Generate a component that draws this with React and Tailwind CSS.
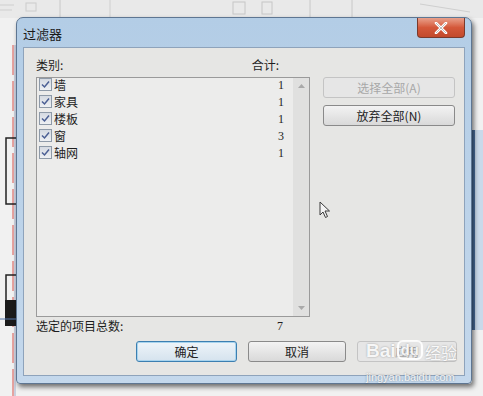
import React from "react";

const rows = [
  ["墙", "1"],
  ["家具", "1"],
  ["楼板", "1"],
  ["窗", "3"],
  ["轴网", "1"],
];

function Check() {
  return (
    <div className="w-[13px] h-[13px] border border-[#8e9aa8] bg-gradient-to-b from-[#d5dae2] to-[#eef0f3] flex items-center justify-center shrink-0">
      <svg width="9" height="9" viewBox="0 0 9 9">
        <path d="M1 4.5 L3.5 7 L8 1.5" fill="none" stroke="#4b5f94" strokeWidth="1.5" />
      </svg>
    </div>
  );
}

function Btn({ children, className = "", disabled = false, focus = false }) {
  return (
    <div
      className={
        "h-[21px] flex items-center justify-center rounded-[3px] text-[12px] " +
        (disabled
          ? "border border-[#c4c4c4] bg-[#e6e6e6] text-[#a8a8a8] "
          : focus
          ? "border border-[#3c7fb1] bg-gradient-to-b from-[#eef4f9] to-[#d5e3ee] text-[#222] shadow-[inset_0_0_0_1px_#a8d4ee] "
          : "border border-[#8a8a8a] bg-gradient-to-b from-[#f3f3f3] to-[#d9d9d9] text-[#222] ") +
        className
      }
    >
      {children}
    </div>
  );
}

export default function App() {
  return (
    <div
      className="relative w-[483px] h-[396px] overflow-hidden bg-[#f1f1f1]"
      style={{ fontFamily: '"Noto Sans CJK SC", "Liberation Sans", sans-serif' }}
    >
      {/* background CAD drawing */}
      <svg className="absolute inset-0" width="483" height="396">
        <rect x="0" y="0" width="483" height="18" fill="#e9e9e9" />
        <line x1="60" y1="0" x2="60" y2="17" stroke="#c8c8c8" />
        <line x1="110" y1="0" x2="110" y2="17" stroke="#cfcfcf" />
        <line x1="310" y1="0" x2="310" y2="17" stroke="#c8c8c8" />
        <line x1="352" y1="0" x2="352" y2="17" stroke="#c8c8c8" />
        <rect x="233" y="2" width="12" height="12" fill="none" stroke="#c6c6c6" />
        <rect x="262" y="2" width="10" height="12" fill="none" stroke="#c6c6c6" />
        <rect x="26" y="3" width="10" height="8" fill="none" stroke="#cccccc" />
        <path d="M0 5 H14 M0 10 H12" stroke="#cfcfcf" />
        <path d="M420 4 L470 12" stroke="#cfcfcf" />
        <line x1="13" y1="45" x2="13" y2="396" stroke="#d9544f" strokeDasharray="30 6" />
        <line x1="15" y1="45" x2="15" y2="396" stroke="#7080b0" strokeWidth="0.6" />
        <rect x="6" y="138" width="12" height="66" fill="none" stroke="#222" strokeWidth="1.5" />
        <rect x="6" y="275" width="12" height="26" fill="none" stroke="#222" strokeWidth="1.5" />
        <rect x="5" y="300" width="12" height="26" fill="#1b1b1b" />
        <line x1="0" y1="319" x2="16" y2="319" stroke="#5577aa" />
        <rect x="472" y="130" width="11" height="200" fill="#c9d9ea" />
        <rect x="472" y="130" width="3" height="200" fill="#4a6f9e" />
      </svg>

      {/* dialog window */}
      <div className="absolute left-[16px] top-[17px] w-[456px] h-[367px] rounded-t-[7px] rounded-b-[4px] bg-gradient-to-b from-[#b3cde6] to-[#c4d8ec] border border-[#5e7692] shadow-[2px_3px_5px_rgba(0,0,0,0.55)] flex flex-col">
        {/* title bar */}
        <div className="relative h-[29px] flex items-center pl-[6px] shrink-0">
          <span className="text-[13px] text-[#1a1a1a] leading-none mt-[2px]">过滤器</span>
          <div className="absolute right-[6px] top-0 w-[48px] h-[20px] rounded-b-[4px] border border-[#7a3a2c] border-t-0 bg-gradient-to-b from-[#e8a08b] via-[#d4583a] to-[#c24a2c] flex items-center justify-center">
            <svg width="14" height="12" viewBox="0 0 14 12">
              <path d="M2 1 L12 11 M12 1 L2 11" stroke="#fff" strokeWidth="2.6" strokeLinecap="round" />
              <path d="M2 1 L12 11 M12 1 L2 11" stroke="#5a5a5a" strokeWidth="0.4" fill="none" />
            </svg>
          </div>
        </div>

        {/* client area */}
        <div className="mx-[6px] mb-[7px] flex-1 bg-[#e6e6e4] border border-[#8ea3bb] pl-[12px] pt-[7px] text-[12px] text-[#1e1e1e]">
          <div className="flex gap-[13px]">
            <div className="w-[274px] flex flex-col">
              <div className="flex justify-between pr-[31px] h-[20px] items-center">
                <span>类别:</span>
                <span>合计:</span>
              </div>
              <div className="mt-[2px] h-[240px] border border-[#9a9a9a] bg-[#ececeb] flex">
                <div className="flex-1 -mt-[2px] flex flex-col">
                  {rows.map(([name, n]) => (
                    <div key={name} className="h-[17px] flex items-center pl-[2px] pr-[9px]">
                      <Check />
                      <span className="ml-[2px] flex-1 leading-none">{name}</span>
                      <span className="leading-none" style={{ fontFamily: '"Liberation Serif", serif', fontSize: "12px" }}>{n}</span>
                    </div>
                  ))}
                </div>
                <div className="w-[16px] bg-[#e0e0df] flex flex-col justify-between items-center py-[6px]">
                  <svg width="7" height="4" viewBox="0 0 7 4"><path d="M0 4 L3.5 0 L7 4 Z" fill="#a9a9a9" /></svg>
                  <svg width="7" height="4" viewBox="0 0 7 4"><path d="M0 0 L3.5 4 L7 0 Z" fill="#a9a9a9" /></svg>
                </div>
              </div>
              <div className="flex h-[18px] items-center">
                <span className="flex-1">选定的项目总数:</span>
                <span className="mr-[27px]" style={{ fontFamily: '"Liberation Serif", serif' }}>7</span>
              </div>
            </div>
            <div className="w-[132px] flex flex-col gap-[7px] pt-[22px]">
              <Btn disabled>选择全部(A)</Btn>
              <Btn>放弃全部(N)</Btn>
            </div>
          </div>
          <div className="flex gap-[11px] pl-[100px] mt-[6px]">
            <Btn focus className="w-[101px]">确定</Btn>
            <Btn className="w-[98px]">取消</Btn>
            <Btn disabled className="w-[100px]">应用</Btn>
          </div>
        </div>
      </div>

      {/* mouse cursor */}
      <svg className="absolute left-[319px] top-[201px]" width="12" height="18" viewBox="0 0 12 18">
        <path d="M1 1 L1 14 L4 11 L6.5 16.5 L8.5 15.5 L6 10 L10.5 10 Z" fill="#f4f4f4" stroke="#3a3a3a" strokeWidth="1" />
      </svg>

      {/* watermark */}
      <div className="absolute left-[366px] top-[340px] flex items-end text-white/90 font-bold [text-shadow:0_0_2px_rgba(0,0,0,0.35)]" style={{ fontFamily: '"Liberation Sans", sans-serif' }}>
        <span className="text-[19px] leading-none">Bai</span>
        <span className="ml-[1px] px-[2px] rounded-[6px] border-2 border-white/90 text-[15px] leading-[16px]">du</span>
        <span className="ml-[2px] text-[16px] leading-none font-normal" style={{ fontFamily: '"Noto Sans CJK SC", sans-serif' }}>经验</span>
      </div>
      <div className="absolute left-[366px] top-[372px] text-[11px] leading-none text-white/90 [text-shadow:0_0_2px_rgba(0,0,0,0.45)]" style={{ fontFamily: '"Liberation Sans", sans-serif' }}>
        jingyan.baidu.com
      </div>
    </div>
  );
}
